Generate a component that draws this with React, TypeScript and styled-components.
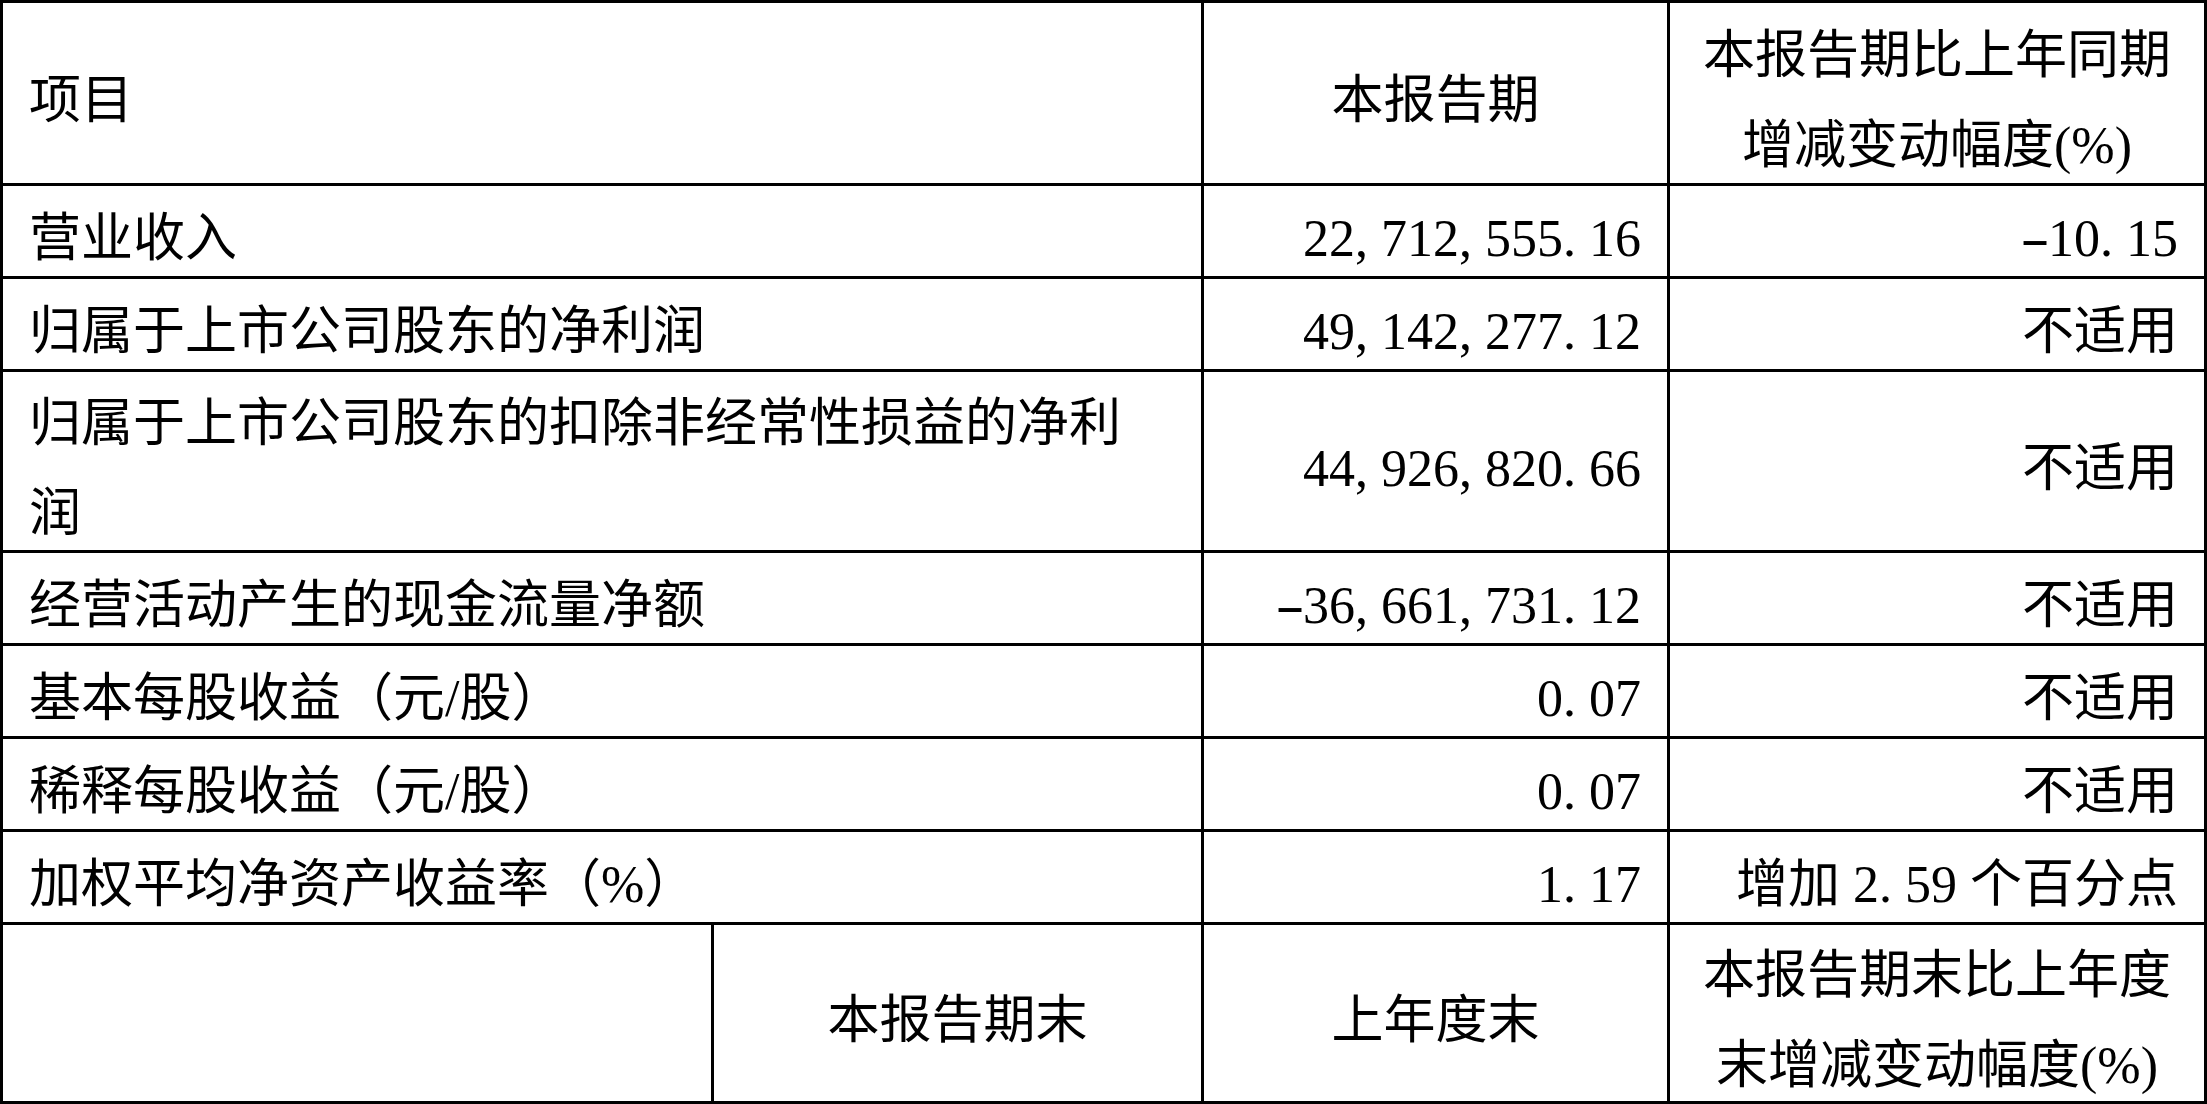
import React from "react";
import styled, { createGlobalStyle } from "styled-components";

const GlobalStyle = createGlobalStyle`
  html, body {
    margin: 0;
    padding: 0;
    background: #ffffff;
  }
  body {
    overflow: hidden;
  }
`;

// ruled sheet: the black background shows through the 3px gaps as grid lines
const Sheet = styled.div`
  display: grid;
  grid-template-columns: 708px 487px 463px 534px;
  grid-template-rows: 180px 90px 90px 178px 90px 90px 90px 90px 176px;
  gap: 3px;
  padding: 3px;
  width: 2207px;
  box-sizing: border-box;
  background: #000000;
  font-family: "Liberation Serif", "Noto Sans CJK SC", serif;
  font-size: 52px;
  line-height: 90px;
  color: #000000;
`;

type Align = "left" | "center" | "right";

const justify = { left: "flex-start", center: "center", right: "flex-end" };
const sidePadding = { left: "0 50px 0 26px", center: "0 20px", right: "0 26px 0 0" };

const Cell = styled.div<{ $align: Align; $span: number }>`
  grid-column: span ${(p) => p.$span};
  display: flex;
  align-items: center;
  justify-content: ${(p) => justify[p.$align]};
  text-align: ${(p) => p.$align};
  background: #ffffff;
  padding: ${(p) => sidePadding[p.$align]};
  padding-top: 16px;
  box-sizing: border-box;
  min-width: 0;
`;

const Body = styled.span`
  display: block;
  white-space: normal;
`;

// SimSun-like half-width punctuation inside figures
const Mark = styled.span<{ $minus?: boolean }>`
  display: inline-block;
  width: 0.5em;
  text-align: ${(p) => (p.$minus ? "center" : "left")};
  transform: ${(p) => (p.$minus ? "scaleX(1.7)" : "none")};
`;

const Figure = ({ value }: { value: string }) => (
  <>
    {Array.from(value).map((ch, i) =>
      ch === "," || ch === "." || ch === "-" ? (
        <Mark key={i} $minus={ch === "-"}>
          {ch}
        </Mark>
      ) : (
        <React.Fragment key={i}>{ch}</React.Fragment>
      )
    )}
  </>
);

const Entry = ({
  align = "left",
  span = 1,
  children,
}: {
  align?: Align;
  span?: number;
  children?: React.ReactNode;
}) => (
  <Cell $align={align} $span={span}>
    <Body>{children}</Body>
  </Cell>
);

const rows = [
  { item: "营业收入", current: "22,712,555.16", change: "-10.15" },
  { item: "归属于上市公司股东的净利润", current: "49,142,277.12", change: "不适用" },
  {
    item: "归属于上市公司股东的扣除非经常性损益的净利润",
    current: "44,926,820.66",
    change: "不适用",
  },
  { item: "经营活动产生的现金流量净额", current: "-36,661,731.12", change: "不适用" },
  { item: "基本每股收益（元/股）", current: "0.07", change: "不适用" },
  { item: "稀释每股收益（元/股）", current: "0.07", change: "不适用" },
  { item: "加权平均净资产收益率（%）", current: "1.17", change: "增加 2.59 个百分点" },
];

export default function App() {
  return (
    <>
      <GlobalStyle />
      <Sheet>
        <Entry span={2}>项目</Entry>
        <Entry align="center">本报告期</Entry>
        <Entry align="center">本报告期比上年同期增减变动幅度(%)</Entry>

        {rows.map((row) => (
          <React.Fragment key={row.item}>
            <Entry span={2}>{row.item}</Entry>
            <Entry align="right">
              <Figure value={row.current} />
            </Entry>
            <Entry align="right">
              <Figure value={row.change} />
            </Entry>
          </React.Fragment>
        ))}

        <Entry />
        <Entry align="center">本报告期末</Entry>
        <Entry align="center">上年度末</Entry>
        <Entry align="center">本报告期末比上年度末增减变动幅度(%)</Entry>
      </Sheet>
    </>
  );
}
